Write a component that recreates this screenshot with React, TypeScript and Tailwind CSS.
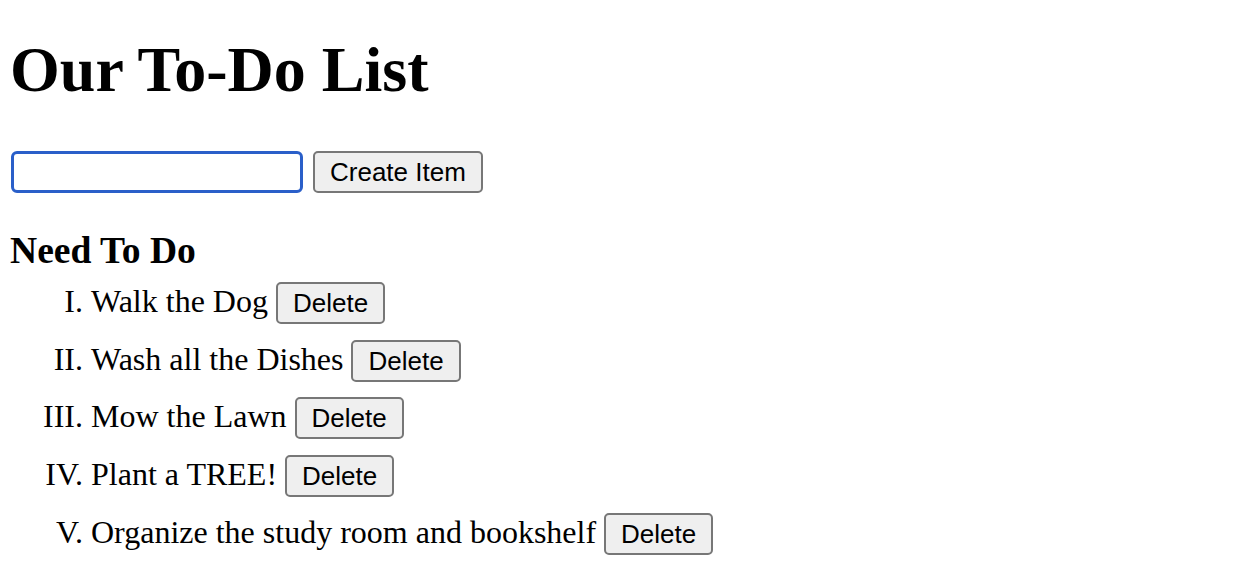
import React, { useState } from "react";

const toRoman = (n: number) => {
  const map: [number, string][] = [
    [10, "X"],
    [9, "IX"],
    [5, "V"],
    [4, "IV"],
    [1, "I"],
  ];
  let out = "";
  for (const [v, s] of map) {
    while (n >= v) {
      out += s;
      n -= v;
    }
  }
  return out;
};

const App = () => {
  const [items, setItems] = useState<string[]>([
    "Walk the Dog",
    "Wash all the Dishes",
    "Mow the Lawn",
    "Plant a TREE!",
    "Organize the study room and bookshelf",
  ]);
  const [text, setText] = useState("");

  const addItem = () => {
    if (!text.trim()) return;
    setItems([...items, text.trim()]);
    setText("");
  };

  return (
    <div className="min-h-screen bg-white text-black pl-[10px] font-['Liberation_Serif',serif]">
      {/* heading */}
      <h1 className="pt-[34px] text-[64px] leading-[72px] font-bold">
        Our To-Do List
      </h1>

      {/* new item row */}
      <div className="mt-[45px] pl-[1px] flex items-center">
        <input
          type="text"
          value={text}
          onChange={(e) => setText(e.target.value)}
          className="w-[292px] h-[42px] mr-[10px] px-[6px] border-[3px] border-[#2a5fc9] rounded-[6px] bg-white outline-none text-[26px] font-['Liberation_Sans',sans-serif]"
        />
        <Btn label="Create Item" onClick={addItem} />
      </div>

      {/* list */}
      <h3 className="mt-[37px] text-[37.6px] leading-[42px] font-bold">
        Need To Do
      </h3>
      <ol className="mt-[2px]">
        {items.map((item, i) => (
          <li
            key={i}
            className="h-[57.7px] pt-[8px] flex items-baseline text-[32px] leading-[36px]"
          >
            <span className="w-[73px] mr-[8px] text-right shrink-0">
              {toRoman(i + 1)}.
            </span>
            <span>{item}</span>
            <Btn
              label="Delete"
              className="ml-[8px]"
              onClick={() => setItems(items.filter((_, j) => j !== i))}
            />
          </li>
        ))}
      </ol>
    </div>
  );
};

const Btn = ({
  label,
  onClick,
  className = "",
}: {
  label: string;
  onClick?: () => void;
  className?: string;
}) => (
  <button
    onClick={onClick}
    className={`h-[42px] px-[15px] py-[4px] border-2 border-[#777777] rounded-[5px] bg-[#efefef] text-black text-[26px] leading-[30px] font-['Liberation_Sans',sans-serif] ${className}`}
  >
    {label}
  </button>
);

export default App;
